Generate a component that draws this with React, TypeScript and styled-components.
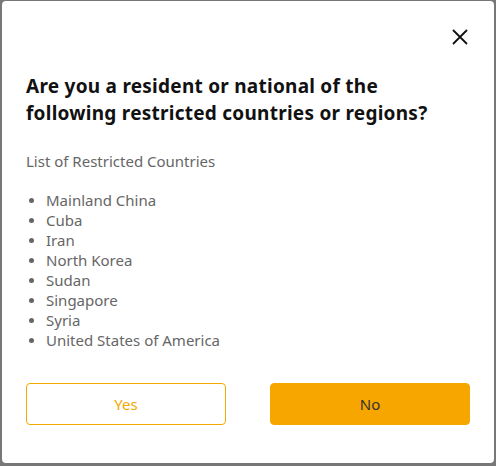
import React from 'react';
import styled, { createGlobalStyle } from 'styled-components';

const GlobalStyle = createGlobalStyle`
  html, body {
    margin: 0;
    padding: 0;
    background: #777;
  }
  body {
    font-family: "Noto Sans", "Noto Sans CJK KR", sans-serif;
  }
`;

const Overlay = styled.div`
  width: 496px;
  height: 466px;
  box-sizing: border-box;
  padding: 1px 2px 3px 2px;
  background: #777;
`;

const Modal = styled.div`
  height: 100%;
  box-sizing: border-box;
  background: #fff;
  border-radius: 4px;
  padding: 24px 24px 0 24px;
  display: flex;
  flex-direction: column;
`;

const Header = styled.div`
  display: flex;
  justify-content: flex-end;
  height: 24px;
`;

const CloseButton = styled.button`
  border: none;
  background: none;
  padding: 0;
  width: 24px;
  height: 24px;
  display: flex;
  align-items: center;
  justify-content: center;
  margin-right: -2px;
  cursor: pointer;
`;

const Title = styled.h2`
  margin: 24px 0 0 0;
  max-width: 410px;
  font-size: 19px;
  line-height: 27px;
  font-weight: 700;
  letter-spacing: 0.25px;
  color: #111;
`;

const Subtitle = styled.p`
  margin: 24px 0 0 0;
  font-size: 15px;
  line-height: 20px;
  color: #666;
`;

const List = styled.ul`
  margin: 19px 0 0 0;
  padding: 0 0 0 20px;
  font-size: 15px;
  line-height: 20px;
  color: #666;

  li::marker {
    color: #666;
    font-size: 14px;
  }
`;

const Buttons = styled.div`
  margin-top: 33px;
  display: flex;
  justify-content: space-between;
`;

interface ActionProps {
  $primary?: boolean;
}
const Action = styled.button<ActionProps>`
  width: 200px;
  height: 42px;
  border-radius: 4px;
  font-family: inherit;
  font-size: 15px;
  cursor: pointer;
  border: 1px solid #f5a800;
  background: ${({ $primary }) => ($primary ? '#f7a600' : '#fff')};
  color: ${({ $primary }) => ($primary ? '#333' : '#f5a800')};
`;

const countries = [
  'Mainland China',
  'Cuba',
  'Iran',
  'North Korea',
  'Sudan',
  'Singapore',
  'Syria',
  'United States of America',
];

const App = () => (
  <>
    <GlobalStyle />
    <Overlay>
      <Modal>
        <Header>
          <CloseButton aria-label="Close">
            <svg width="18" height="18" viewBox="0 0 18 18">
              <path d="M2 2L16 16M16 2L2 16" stroke="#111" strokeWidth="1.8" />
            </svg>
          </CloseButton>
        </Header>
        <Title>Are you a resident or national of the following restricted countries or regions?</Title>
        <Subtitle>List of Restricted Countries</Subtitle>
        <List>
          {countries.map((c) => (
            <li key={c}>{c}</li>
          ))}
        </List>
        <Buttons>
          <Action>Yes</Action>
          <Action $primary>No</Action>
        </Buttons>
      </Modal>
    </Overlay>
  </>
);

export default App;
